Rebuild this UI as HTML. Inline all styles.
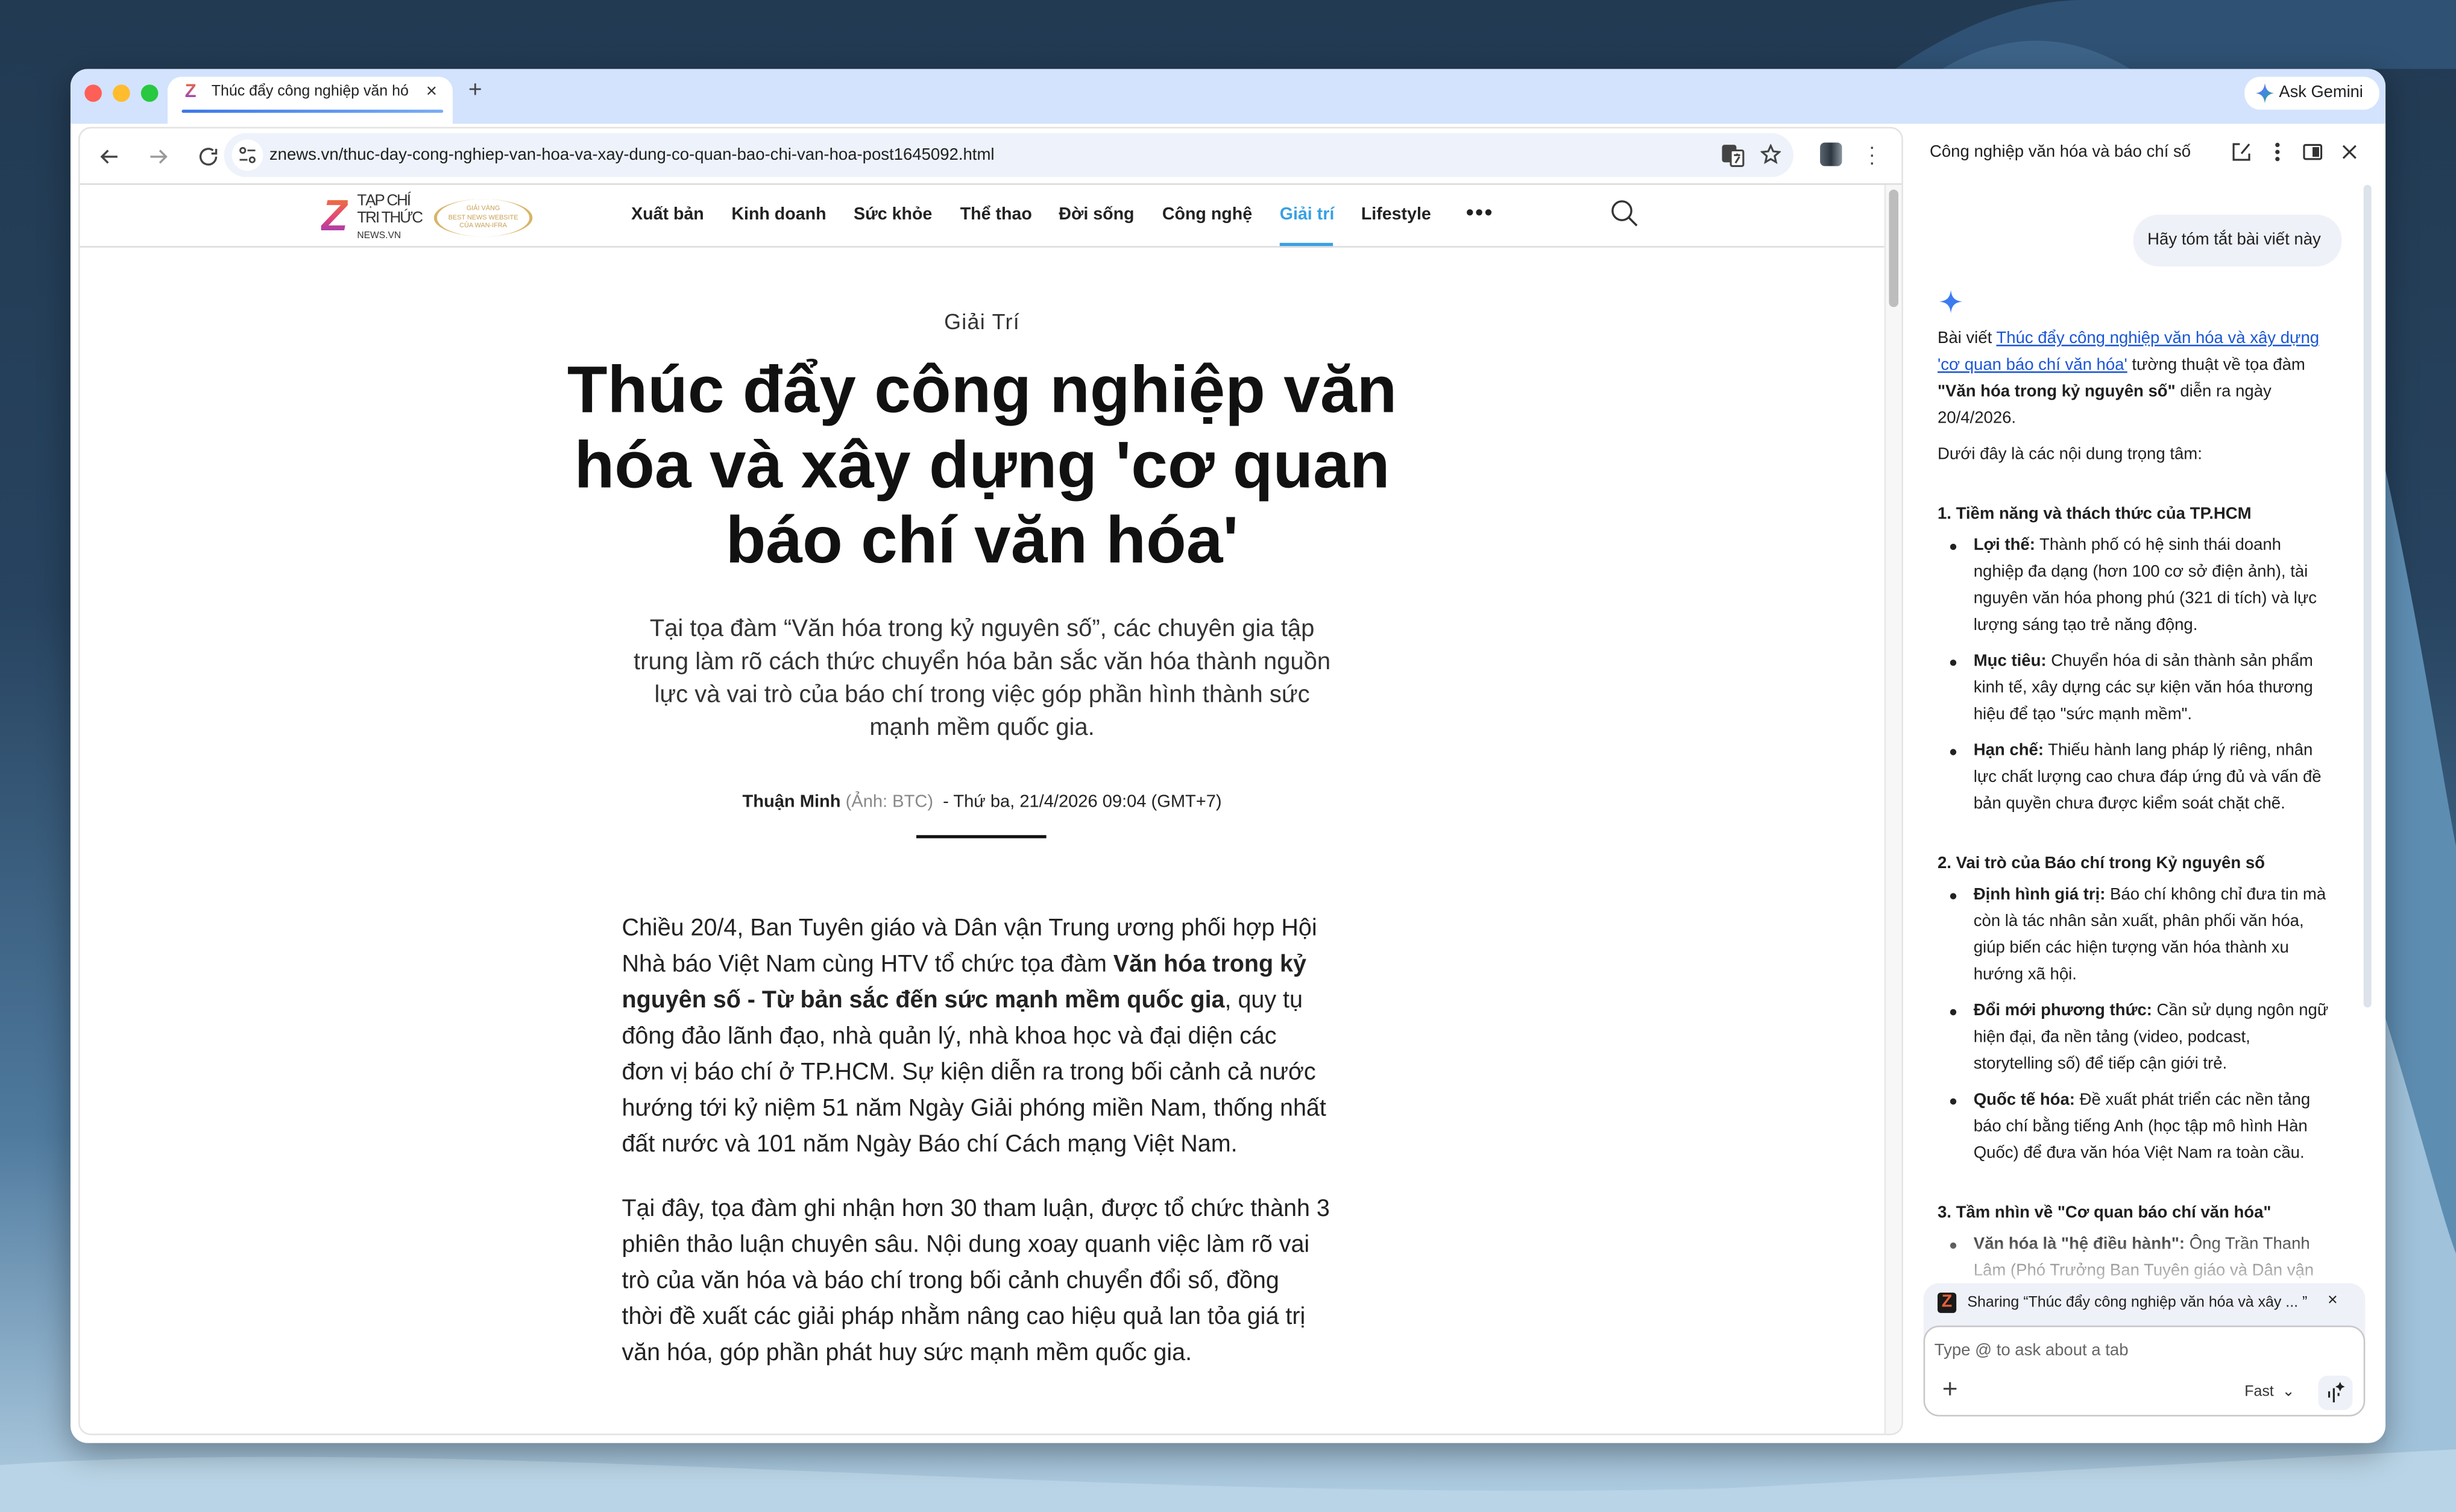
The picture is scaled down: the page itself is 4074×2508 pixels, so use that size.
<!DOCTYPE html>
<html><head><meta charset="utf-8">
<style>
*{margin:0;padding:0;box-sizing:border-box}
html,body{width:4074px;height:2508px;overflow:hidden;background:#243c56}
#s{position:absolute;left:0;top:0;width:1568px;height:965px;transform-origin:0 0;transform:scale(2.59821,2.59896);font-family:"Liberation Sans","DejaVu Sans",sans-serif;color:#1f1f1f}
.a{position:absolute;white-space:nowrap}
.win{position:absolute;left:45px;top:44px;width:1478px;height:877px;border-radius:11px;background:#fff;overflow:hidden;box-shadow:0 6px 20px rgba(0,0,0,.35)}
.strip{position:absolute;left:0;top:0;width:1478px;height:35px;background:#d3e3fd}
.dot{position:absolute;width:11px;height:11px;border-radius:50%;top:10px}
.nav span{position:absolute;font-size:11px;font-weight:bold;color:#222}
.body p{font-size:15.2px;line-height:23px;color:#222}
.g{font-size:10.6px;line-height:17px;color:#1f1f1f}
.g b{font-weight:bold}
.li{position:absolute;left:1260px}
.bul{position:absolute;left:1245px;width:4px;height:4px;border-radius:50%;background:#222}
</style></head><body>
<div id="s">
<svg class="a" style="left:0;top:0" width="1568" height="965" viewBox="0 0 1568 965">
<defs>
<linearGradient id="bg" x1="0" y1="0" x2="0" y2="1">
<stop offset="0" stop-color="#223a52"/><stop offset=".4" stop-color="#27435f"/><stop offset=".75" stop-color="#4f7a9e"/><stop offset="1" stop-color="#b2cfe3"/></linearGradient>
</defs>
<rect width="1568" height="965" fill="url(#bg)"/>
<path d="M1210 44 C1260 10 1300 0 1330 0 L1568 0 L1568 44Z" fill="#2f5173"/>
<path d="M1240 44 C1280 20 1320 20 1360 44Z" fill="#3d6488"/>
<path d="M1523 300 C1545 400 1560 500 1568 540 L1568 965 L1523 965Z" fill="#5e8db2"/>
<path d="M1523 650 C1545 720 1560 780 1568 800 L1568 965 L1523 965Z" fill="#a0c2da"/>
<path d="M0 935 C300 915 700 960 1100 950 L1568 925 L1568 965 L0 965Z" fill="#b9d4e6"/>
</svg>
<div class="win">
<div class="strip"></div>
<div class="dot" style="left:9px;background:#fe5f57"></div>
<div class="dot" style="left:27px;background:#febc2e"></div>
<div class="dot" style="left:45px;background:#28c840"></div>
<div class="a" style="left:62px;top:5px;width:182px;height:32px;background:#fff;border-radius:9px 9px 0 0"></div>
<div class="a" style="left:71px;top:26px;width:167px;height:2px;background:linear-gradient(90deg,#3b78e7,#7aaef5);border-radius:1px"></div>
<div class="a" style="left:73px;top:7px;font-size:12px;font-weight:bold;background:linear-gradient(#f2752e,#8a3ad6);-webkit-background-clip:text;color:transparent">Z</div>
<div class="a" style="left:90px;top:9px;font-size:9.6px;color:#222;width:128px;overflow:hidden">Thúc đẩy công nghiệp văn hó</div>
<div class="a" style="left:227px;top:7px;font-size:12px;color:#333">×</div>
<div class="a" style="left:254px;top:5px;font-size:15px;color:#444">+</div>
<div class="a" style="left:1388px;top:5px;width:86px;height:21px;background:#fff;border-radius:10px"></div>
<svg class="a" style="left:1395px;top:9px" width="12" height="13" viewBox="0 0 12 13"><defs><linearGradient id="gm" x1="0" y1="0" x2="1" y2="1"><stop offset="0" stop-color="#e94235"/><stop offset=".4" stop-color="#4285f4"/><stop offset="1" stop-color="#34a853"/></linearGradient></defs><path d="M6 0 C6.5 4 8 6 12 6.5 C8 7 6.5 9 6 13 C5.5 9 4 7 0 6.5 C4 6 5.5 4 6 0Z" fill="url(#gm)"/></svg>
<div class="a" style="left:1410px;top:9px;font-size:10.5px;color:#1f1f1f">Ask Gemini</div>
<!-- left pane: abs = rel + (50,81) -->
<div class="a" style="left:5px;top:37px;width:1165px;height:835px;border-radius:8px;border:1px solid #e3e3e3;background:#fff;overflow:hidden">
 <svg class="a" style="left:10px;top:8px" width="90" height="20" viewBox="0 0 90 20" fill="none" stroke="#444" stroke-width="1.3"><path d="M14 10H4M8 6L4 10L8 14"/><path d="M35 10H45M41 6L45 10L41 14" stroke="#999"/><path d="M75 6A5 5 0 1 0 77 10M77 5V8H74"/></svg>
 <div class="a" style="left:92px;top:3px;width:1002px;height:28px;background:#edf2fb;border-radius:14px"></div>
 <div class="a" style="left:97px;top:7px;width:20px;height:20px;background:#fff;border-radius:50%"></div>
 <svg class="a" style="left:101px;top:11px" width="12" height="12" viewBox="0 0 12 12" fill="none" stroke="#444" stroke-width="1.1"><circle cx="3" cy="3" r="1.6"/><path d="M6 3H11M1 9H6"/><circle cx="9" cy="9" r="1.6"/></svg>
 <div class="a" style="left:121px;top:11px;font-size:10.6px;color:#1f1f1f">znews.vn/thuc-day-cong-nghiep-van-hoa-va-xay-dung-co-quan-bao-chi-van-hoa-post1645092.html</div>
 <svg class="a" style="left:1048px;top:10px" width="16" height="15" viewBox="0 0 16 15" fill="none" stroke="#444" stroke-width="1.2"><rect x="1" y="1" width="8" height="10" rx="1" fill="#444"/><rect x="6" y="4" width="8" height="10" rx="1" fill="#fff"/><path d="M8 7H12M10 6V7M9 12L11.5 8"/></svg>
 <svg class="a" style="left:1073px;top:10px" width="13" height="13" viewBox="0 0 13 13" fill="none" stroke="#444" stroke-width="1.2"><path d="M6.5 1L8.1 4.6L12 5L9 7.6L9.9 11.5L6.5 9.5L3.1 11.5L4 7.6L1 5L4.9 4.6Z"/></svg>
 <div class="a" style="left:1111px;top:9px;width:14px;height:15px;border-radius:3px;background:linear-gradient(90deg,#5a6570,#2c3740,#8a959e)"></div>
 <div class="a" style="left:1142px;top:9px;font-size:13px;color:#444;line-height:5px">·<br>·<br>·</div>
 <div class="a" style="left:0;top:35px;width:1165px;height:1px;background:#dcdcdc"></div>
 <!-- site header -->
 <div class="a" style="left:154px;top:40px;font-size:28px;font-weight:bold;font-style:italic;background:linear-gradient(#f5802a,#e0447a 55%,#7c3ad8);-webkit-background-clip:text;color:transparent;line-height:32px">Z</div>
 <div class="a" style="left:177px;top:42px;font-size:10px;line-height:10.5px;color:#333;letter-spacing:-.8px">TẠP CHÍ<br>TRI THỨC<br><span style="font-size:6px;letter-spacing:0">NEWS.VN</span></div>
 <div class="a" style="left:226px;top:45px;width:63px;height:24px;border-left:2px solid #d8b56a;border-right:2px solid #d8b56a;border-radius:50%;font-size:4.2px;line-height:5.5px;color:#c9a055;text-align:center;padding-top:3px">GIẢI VÀNG<br>BEST NEWS WEBSITE<br>CỦA WAN-IFRA</div>
 <div class="nav">
 <span style="left:352px;top:49px">Xuất bản</span><span style="left:416px;top:49px">Kinh doanh</span><span style="left:494px;top:49px">Sức khỏe</span><span style="left:562px;top:49px">Thể thao</span><span style="left:625px;top:49px">Đời sống</span><span style="left:691px;top:49px">Công nghệ</span><span style="left:766px;top:49px;color:#3aa0e3">Giải trí</span><span style="left:818px;top:49px">Lifestyle</span><span style="left:885px;top:45px;font-size:14px;letter-spacing:1px">•••</span>
 </div>
 <svg class="a" style="left:977px;top:45px" width="18" height="18" viewBox="0 0 18 18" fill="none" stroke="#333" stroke-width="1.3"><circle cx="7.5" cy="7.5" r="6"/><path d="M12 12L17 17"/></svg>
 <div class="a" style="left:766px;top:73px;width:34px;height:3px;background:#3aa0e3"></div>
 <div class="a" style="left:0;top:75px;width:1152px;height:1px;background:#ddd"></div>
 <div class="a" style="left:1152px;top:36px;width:13px;height:800px;background:#f7f7f7;border-left:1px solid #e8e8e8"></div>
 <div class="a" style="left:1155px;top:39px;width:6px;height:75px;background:#bdbdbd;border-radius:3px"></div>
 <!-- article -->
 <div class="a" style="left:0;width:1152px;top:116px;text-align:center;font-size:13.8px;color:#333;letter-spacing:.5px">Giải Trí</div>
 <div class="a" style="left:0;width:1152px;top:143px;text-align:center;font-size:42px;line-height:48px;font-weight:bold;color:#111">Thúc đẩy công nghiệp văn<br>hóa và xây dựng 'cơ quan<br>báo chí văn hóa'</div>
 <div class="a" style="left:0;width:1152px;top:309px;text-align:center;font-size:15.4px;line-height:21px;color:#333">Tại tọa đàm “Văn hóa trong kỷ nguyên số”, các chuyên gia tập<br>trung làm rõ cách thức chuyển hóa bản sắc văn hóa thành nguồn<br>lực và vai trò của báo chí trong việc góp phần hình thành sức<br>mạnh mềm quốc gia.</div>
 <div class="a" style="left:0;width:1152px;top:424px;text-align:center;font-size:11.2px;color:#222"><b>Thuận Minh</b> <span style="color:#888">(Ảnh: BTC)</span> &nbsp;- Thứ ba, 21/4/2026 09:04 (GMT+7)</div>
 <div class="a" style="left:534px;top:451px;width:83px;height:2px;background:#111"></div>
 <div class="a body" style="left:346px;top:499px">
 <p>Chiều 20/4, Ban Tuyên giáo và Dân vận Trung ương phối hợp Hội<br>Nhà báo Việt Nam cùng HTV tổ chức tọa đàm <b>Văn hóa trong kỷ<br>nguyên số - Từ bản sắc đến sức mạnh mềm quốc gia</b>, quy tụ<br>đông đảo lãnh đạo, nhà quản lý, nhà khoa học và đại diện các<br>đơn vị báo chí ở TP.HCM. Sự kiện diễn ra trong bối cảnh cả nước<br>hướng tới kỷ niệm 51 năm Ngày Giải phóng miền Nam, thống nhất<br>đất nước và 101 năm Ngày Báo chí Cách mạng Việt Nam.</p>
 <p style="margin-top:18px">Tại đây, tọa đàm ghi nhận hơn 30 tham luận, được tổ chức thành 3<br>phiên thảo luận chuyên sâu. Nội dung xoay quanh việc làm rõ vai<br>trò của văn hóa và báo chí trong bối cảnh chuyển đổi số, đồng<br>thời đề xuất các giải pháp nhằm nâng cao hiệu quả lan tỏa giá trị<br>văn hóa, góp phần phát huy sức mạnh mềm quốc gia.</p>
 </div>
</div>
</div>
<!-- Gemini panel (absolute coords) -->
<div class="a" style="left:1232px;top:91px;font-size:10.6px;color:#1f1f1f">Công nghiệp văn hóa và báo chí số</div>
<svg class="a" style="left:1424px;top:90px" width="84" height="14" viewBox="0 0 84 14" fill="none" stroke="#333" stroke-width="1.2"><path d="M6 2H2V12H12V8M7 8L12 2"/><circle cx="30" cy="2.5" r=".8" fill="#333"/><circle cx="30" cy="7" r=".8" fill="#333"/><circle cx="30" cy="11.5" r=".8" fill="#333"/><rect x="47" y="2.5" width="11" height="9" rx="1"/><rect x="53" y="4.5" width="3" height="5" fill="#333"/><path d="M72 3L80 11M80 3L72 11"/></svg>
<div class="a" style="left:1509px;top:118px;width:5px;height:525px;background:#dde3ea;border-radius:3px"></div>
<div class="a" style="left:1362px;top:137px;width:133px;height:33px;background:#eef1f8;border-radius:16px"></div>
<div class="a" style="left:1371px;top:147px;font-size:10.6px">Hãy tóm tắt bài viết này</div>
<svg class="a" style="left:1238px;top:185px" width="15" height="15" viewBox="0 0 15 15"><path d="M7.5 0 C8 5 10 7 15 7.5 C10 8 8 10 7.5 15 C7 10 5 8 0 7.5 C5 7 7 5 7.5 0Z" fill="#3c7cf0"/></svg>
<div class="a g" style="left:1237px;top:208px">Bài viết <span style="color:#1a56d6;text-decoration:underline">Thúc đẩy công nghiệp văn hóa và xây dựng</span><br><span style="color:#1a56d6;text-decoration:underline">'cơ quan báo chí văn hóa'</span> tường thuật về tọa đàm<br><b>"Văn hóa trong kỷ nguyên số"</b> diễn ra ngày<br>20/4/2026.</div>
<div class="a g" style="left:1237px;top:282px">Dưới đây là các nội dung trọng tâm:</div>
<div class="a g" style="left:1237px;top:320px"><b>1. Tiềm năng và thách thức của TP.HCM</b></div>
<div class="bul" style="top:347px"></div><div class="a g li" style="top:340px"><b>Lợi thế:</b> Thành phố có hệ sinh thái doanh<br>nghiệp đa dạng (hơn 100 cơ sở điện ảnh), tài<br>nguyên văn hóa phong phú (321 di tích) và lực<br>lượng sáng tạo trẻ năng động.</div>
<div class="bul" style="top:421px"></div><div class="a g li" style="top:414px"><b>Mục tiêu:</b> Chuyển hóa di sản thành sản phẩm<br>kinh tế, xây dựng các sự kiện văn hóa thương<br>hiệu để tạo "sức mạnh mềm".</div>
<div class="bul" style="top:478px"></div><div class="a g li" style="top:471px"><b>Hạn chế:</b> Thiếu hành lang pháp lý riêng, nhân<br>lực chất lượng cao chưa đáp ứng đủ và vấn đề<br>bản quyền chưa được kiểm soát chặt chẽ.</div>
<div class="a g" style="left:1237px;top:543px"><b>2. Vai trò của Báo chí trong Kỷ nguyên số</b></div>
<div class="bul" style="top:570px"></div><div class="a g li" style="top:563px"><b>Định hình giá trị:</b> Báo chí không chỉ đưa tin mà<br>còn là tác nhân sản xuất, phân phối văn hóa,<br>giúp biến các hiện tượng văn hóa thành xu<br>hướng xã hội.</div>
<div class="bul" style="top:644px"></div><div class="a g li" style="top:637px"><b>Đổi mới phương thức:</b> Cần sử dụng ngôn ngữ<br>hiện đại, đa nền tảng (video, podcast,<br>storytelling số) để tiếp cận giới trẻ.</div>
<div class="bul" style="top:701px"></div><div class="a g li" style="top:694px"><b>Quốc tế hóa:</b> Đề xuất phát triển các nền tảng<br>báo chí bằng tiếng Anh (học tập mô hình Hàn<br>Quốc) để đưa văn hóa Việt Nam ra toàn cầu.</div>
<div class="a g" style="left:1237px;top:766px"><b>3. Tầm nhìn về "Cơ quan báo chí văn hóa"</b></div>
<div class="bul" style="top:793px"></div><div class="a g li" style="top:786px"><b>Văn hóa là "hệ điều hành":</b> Ông Trần Thanh<br>Lâm (Phó Trưởng Ban Tuyên giáo và Dân vận</div>
<div class="a" style="left:1222px;top:782px;width:288px;height:40px;background:linear-gradient(rgba(255,255,255,0),rgba(255,255,255,.85))"></div>
<div class="a" style="left:1228px;top:819px;width:282px;height:40px;background:#eef1f8;border-radius:10px 10px 0 0"></div>
<div class="a" style="left:1237px;top:825px;width:12px;height:13px;background:#1a1a1a;border-radius:2px;font-size:11px;font-weight:bold;line-height:13px;text-align:center;color:#e8603a">Z</div>
<div class="a" style="left:1256px;top:826px;font-size:9.6px">Sharing “Thúc đẩy công nghiệp văn hóa và xây ... ”</div>
<div class="a" style="left:1486px;top:824px;font-size:11px">×</div>
<div class="a" style="left:1228px;top:846px;width:282px;height:58px;background:#fff;border:1px solid #c8c8c8;border-radius:10px"></div>
<div class="a" style="left:1235px;top:856px;font-size:10.6px;color:#666">Type @ to ask about a tab</div>
<div class="a" style="left:1240px;top:878px;font-size:17px;color:#444;line-height:18px">+</div>
<div class="a" style="left:1433px;top:883px;font-size:9.6px;color:#333">Fast &nbsp;⌄</div>
<div class="a" style="left:1480px;top:878px;width:22px;height:22px;background:#eef1f8;border-radius:6px"></div>
<svg class="a" style="left:1485px;top:881px" width="12" height="16" viewBox="0 0 12 16" fill="none" stroke="#222" stroke-width="1.2"><path d="M2 7V11M5 5V14M8 8V10"/><path d="M9 1L10 3L12 4L10 5L9 7L8 5L6 4L8 3Z" fill="#222" stroke="none"/></svg>
</div>
</body></html>
